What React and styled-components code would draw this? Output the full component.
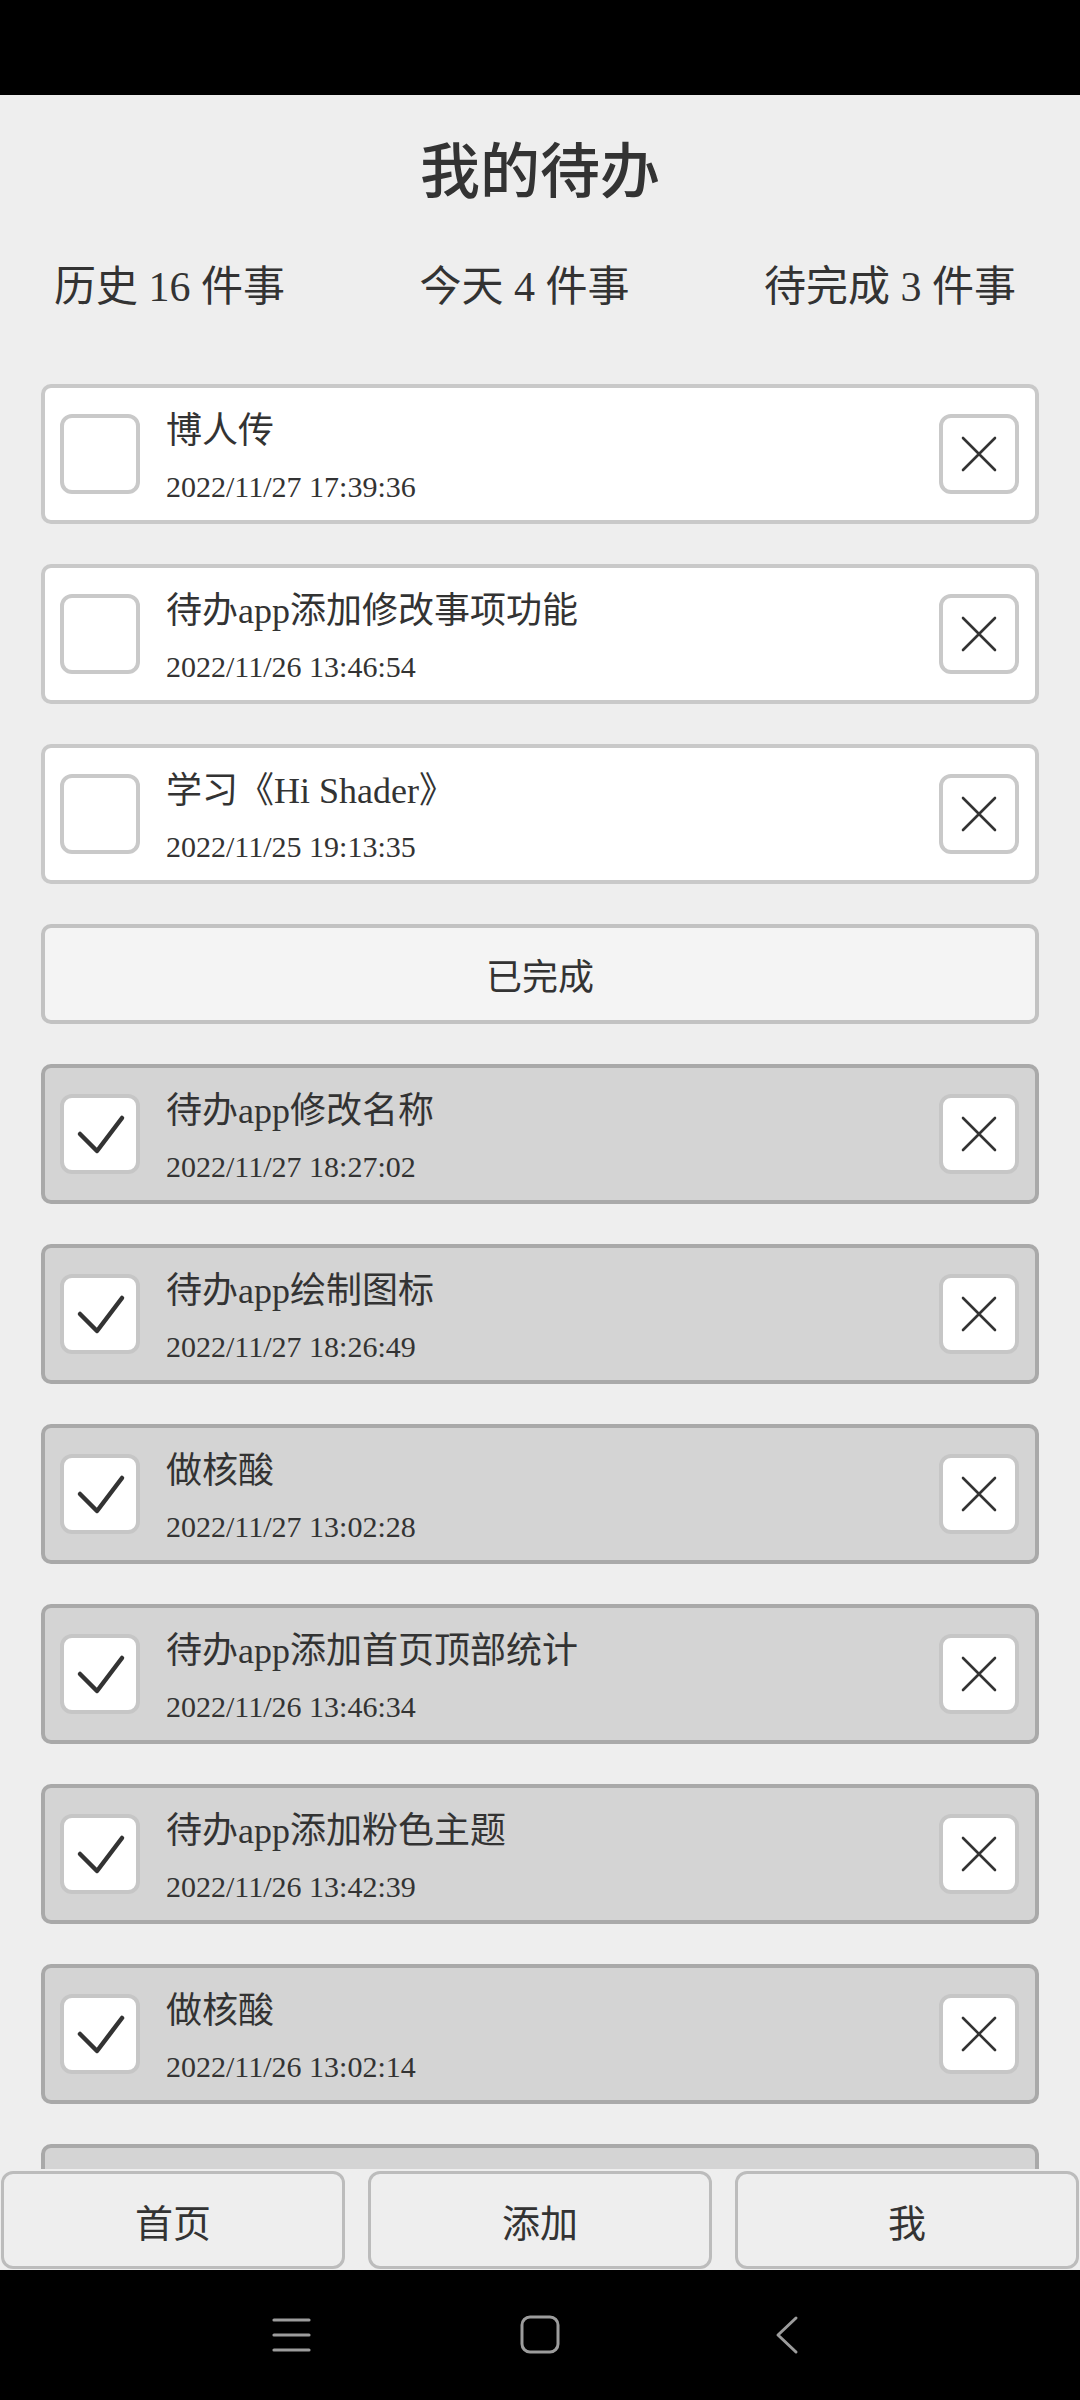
import React from "react";
import styled, { createGlobalStyle } from "styled-components";

const GlobalStyle = createGlobalStyle`
  html, body {
    margin: 0;
    padding: 0;
    height: 100%;
    background: #000;
  }
  #root {
    height: 100%;
  }
  * {
    box-sizing: border-box;
  }
`;

const pending = [
  { title: "博人传", time: "2022/11/27 17:39:36" },
  { title: "待办app添加修改事项功能", time: "2022/11/26 13:46:54" },
  { title: "学习《Hi Shader》", time: "2022/11/25 19:13:35" },
];

const finished = [
  { title: "待办app修改名称", time: "2022/11/27 18:27:02" },
  { title: "待办app绘制图标", time: "2022/11/27 18:26:49" },
  { title: "做核酸", time: "2022/11/27 13:02:28" },
  { title: "待办app添加首页顶部统计", time: "2022/11/26 13:46:34" },
  { title: "待办app添加粉色主题", time: "2022/11/26 13:42:39" },
  { title: "做核酸", time: "2022/11/26 13:02:14" },
];

const CheckIcon = () => (
  <svg width="80" height="80" viewBox="0 0 80 80">
    <polyline
      points="20,40 37,57 62,24"
      fill="none"
      stroke="#333"
      strokeWidth="4.5"
      strokeLinecap="round"
      strokeLinejoin="round"
    />
  </svg>
);

const CrossIcon = () => (
  <svg width="80" height="80" viewBox="0 0 80 80">
    <path d="M24 24 L56 56 M56 24 L24 56" stroke="#333" strokeWidth="2.6" strokeLinecap="round" />
  </svg>
);

const TodoItem = ({ item, done }) => (
  <Card $done={done}>
    <Box $done={done}>{done && <CheckIcon />}</Box>
    <TextBlock>
      <ItemTitle>{item.title}</ItemTitle>
      <ItemTime>{item.time}</ItemTime>
    </TextBlock>
    <Box $done={done}>
      <CrossIcon />
    </Box>
  </Card>
);

const App = () => {
  return (
    <>
      <GlobalStyle />
      <Screen>
        <StatusBar />
        <Main>
          <Title>我的待办</Title>
          <Stats>
            <span>历史 16 件事</span>
            <span>今天 4 件事</span>
            <span>待完成 3 件事</span>
          </Stats>
          <List>
            {pending.map((item, i) => (
              <TodoItem key={"p" + i} item={item} />
            ))}
            <DoneBanner>已完成</DoneBanner>
            {finished.map((item, i) => (
              <TodoItem key={"f" + i} item={item} done />
            ))}
            {/* next item, scrolled under the tab bar */}
            <Card $done />
          </List>
        </Main>
        <TabBar>
          <TabButton>首页</TabButton>
          <TabButton>添加</TabButton>
          <TabButton>我</TabButton>
        </TabBar>
        <SystemBar>
          <svg width="40" height="40" viewBox="0 0 40 40">
            <path d="M2 5 H37 M2 20 H37 M2 35 H37" stroke="#9c9c9c" strokeWidth="3.2" strokeLinecap="round" />
          </svg>
          <svg width="40" height="40" viewBox="0 0 40 40">
            <rect x="2" y="2" width="36" height="35" rx="8" fill="none" stroke="#9c9c9c" strokeWidth="3" />
          </svg>
          <svg width="40" height="40" viewBox="0 0 40 40">
            <polyline points="28,3 10,20 28,37" fill="none" stroke="#9c9c9c" strokeWidth="3" strokeLinecap="round" strokeLinejoin="round" />
          </svg>
        </SystemBar>
      </Screen>
    </>
  );
};

export default App;

const fontStack = `"Liberation Serif", "Noto Sans CJK SC", serif`;

const Screen = styled.div`
  height: 100vh;
  display: flex;
  flex-direction: column;
  background: #eeeeee;
  font-family: ${fontStack};
  color: #333;
`;

const StatusBar = styled.div`
  height: 95px;
  flex-shrink: 0;
  background: #000;
`;

const Main = styled.main`
  flex: 1;
  min-height: 0;
  overflow: hidden;
  padding-top: 42px;
`;

const Title = styled.h1`
  margin: 0;
  text-align: center;
  font-size: 60px;
  line-height: 72px;
  font-weight: 500;
  color: #333;
`;

const Stats = styled.div`
  display: flex;
  justify-content: space-between;
  margin-top: 53px;
  padding: 0 64px 0 54px;
  font-size: 42px;
  line-height: 50px;
  color: #333;
`;

const List = styled.div`
  display: flex;
  flex-direction: column;
  gap: 40px;
  padding: 0 41px;
  margin-top: 72px;
`;

const Card = styled.div`
  height: 140px;
  flex-shrink: 0;
  display: flex;
  align-items: center;
  padding: 0 16px 0 15px;
  border: 4px solid ${(p) => (p.$done ? "#a9a9a9" : "#c9c9c9")};
  border-radius: 10px;
  background: ${(p) => (p.$done ? "#d4d4d4" : "#ffffff")};
`;

const Box = styled.div`
  width: 80px;
  height: 80px;
  flex-shrink: 0;
  display: flex;
  align-items: center;
  justify-content: center;
  border: 4px solid ${(p) => (p.$done ? "#c6c6c6" : "#c9c9c9")};
  border-radius: 12px;
  background: #fff;

  svg {
    flex-shrink: 0;
  }
`;

const TextBlock = styled.div`
  flex: 1;
  display: flex;
  flex-direction: column;
  gap: 16px;
  padding-top: 6px;
  margin-left: 26px;
`;

const ItemTitle = styled.div`
  font-size: 36px;
  line-height: 44px;
  color: #333;
  white-space: nowrap;
`;

const ItemTime = styled.div`
  font-size: 30px;
  line-height: 36px;
  color: #333;
`;

const DoneBanner = styled.div`
  height: 100px;
  flex-shrink: 0;
  display: flex;
  align-items: center;
  justify-content: center;
  border: 4px solid #c2c2c2;
  border-radius: 10px;
  background: #f4f4f4;
  font-size: 36px;
  color: #333;
`;

const TabBar = styled.nav`
  height: 101px;
  flex-shrink: 0;
  display: grid;
  grid-template-columns: repeat(3, 1fr);
  gap: 23px;
  padding: 2px 1px 1px;
  background: #eeeeee;
`;

const TabButton = styled.div`
  display: flex;
  align-items: center;
  justify-content: center;
  border: 3px solid #bcbcbc;
  border-radius: 12px;
  background: #eeeeee;
  font-size: 38px;
  color: #333;
`;

const SystemBar = styled.div`
  height: 130px;
  flex-shrink: 0;
  display: flex;
  align-items: center;
  justify-content: center;
  gap: 208px;
  background: #000;
`;
